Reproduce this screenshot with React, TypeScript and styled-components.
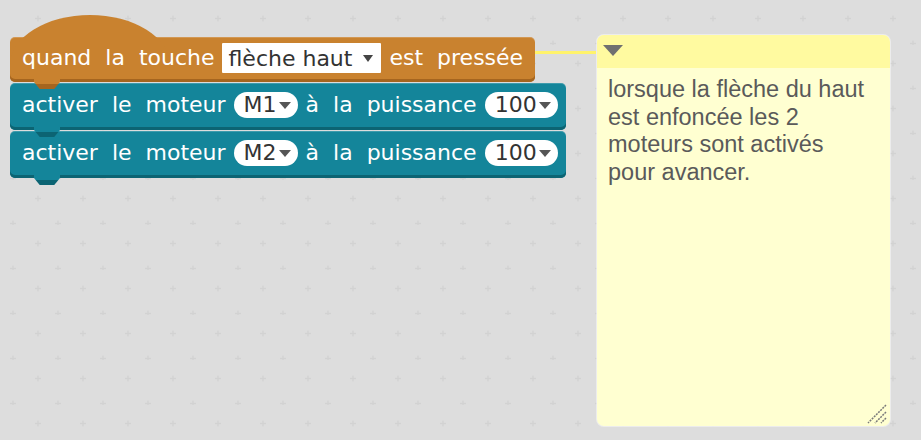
import React from "react";
import styled, { createGlobalStyle } from "styled-components";

const GlobalStyle = createGlobalStyle`
  html, body {
    margin: 0;
    padding: 0;
    background: #dddddd;
    overflow: hidden;
  }
`;

const ORANGE = "#c9822f";
const ORANGE_SHADE = "#a5651f";
const TEAL = "#14859a";
const TEAL_SHADE = "#0c6473";

const Workspace = styled.div`
  position: relative;
  display: flex;
  align-items: flex-start;
  width: 921px;
  height: 440px;
  padding: 0 31px 0 10px;
  box-sizing: border-box;
  background: #dddddd;
  overflow: hidden;
`;

const GridLayer = styled.svg`
  position: absolute;
  inset: 0;
  width: 100%;
  height: 100%;
  pointer-events: none;
`;

const Stack = styled.div`
  position: relative;
  z-index: 1;
  display: flex;
  flex-direction: column;
  align-items: flex-start;
  gap: 1px;
  margin-top: 37px;
`;

const Block = styled.div<{ $color: string; $shade: string; $layer: number; $hat?: boolean }>`
  position: relative;
  z-index: ${(p) => p.$layer};
  display: flex;
  align-items: center;
  gap: 8px;
  height: ${(p) => (p.$hat ? 45 : 47)}px;
  padding: 0 ${(p) => (p.$hat ? 12 : 8)}px 3px 12px;
  box-sizing: border-box;
  background: ${(p) => p.$color};
  border-radius: 5px;
  box-shadow: inset 0 -3px 0 ${(p) => p.$shade}, inset 0 1px 0 rgba(255, 255, 255, 0.18);

  &::before {
    content: "";
    display: ${(p) => (p.$hat ? "block" : "none")};
    position: absolute;
    z-index: -1;
    left: 0;
    top: -22px;
    width: 160px;
    height: 50px;
    border-radius: 50% 50% 0 0 / 100% 100% 0 0;
    background: ${(p) => p.$color};
  }

  &::after {
    content: "";
    position: absolute;
    left: 24px;
    top: calc(100% - 3px);
    width: 26px;
    height: 10px;
    background: linear-gradient(${(p) => p.$color} 0 55%, ${(p) => p.$shade} 55% 100%);
    clip-path: polygon(0 0, 100% 0, 100% 30%, 78% 100%, 22% 100%, 0 30%);
  }
`;

const Label = styled.span`
  color: #ffffff;
  font-family: "DejaVu Sans", sans-serif;
  font-size: 22px;
  word-spacing: 7px;
  white-space: pre;
  line-height: 1;
`;

const Caret = styled.span<{ $w: number; $h: number; $color: string }>`
  display: inline-block;
  width: 0;
  height: 0;
  border-left: ${(p) => p.$w / 2}px solid transparent;
  border-right: ${(p) => p.$w / 2}px solid transparent;
  border-top: ${(p) => p.$h}px solid ${(p) => p.$color};
`;

const Field = styled.span`
  display: flex;
  align-items: center;
  gap: 11px;
  height: 30px;
  padding: 0 8px 0 6px;
  background: #ffffff;
  border-radius: 1px;
  color: #333333;
  font-family: "DejaVu Sans", sans-serif;
  font-size: 22px;
  white-space: pre;
`;

const Pill = styled.span`
  display: flex;
  align-items: center;
  gap: 2px;
  height: 26px;
  padding: 0 7px 0 10px;
  background: #ffffff;
  border-radius: 13px;
  color: #333333;
  font-family: "DejaVu Sans", sans-serif;
  font-size: 22px;
  line-height: 1;
`;

const Connector = styled.span`
  position: absolute;
  left: 100%;
  top: 14px;
  width: 61px;
  height: 3px;
  background: #fff36b;
`;

const Comment = styled.div`
  position: relative;
  z-index: 1;
  display: flex;
  flex-direction: column;
  width: 293px;
  height: 391px;
  margin: 35px 0 0 auto;
  border-radius: 7px;
  overflow: hidden;
  box-shadow: 0 0 0 1px rgba(255, 255, 255, 0.45);
  background: #ffffd1;
`;

const CommentHeader = styled.div`
  display: flex;
  align-items: flex-start;
  height: 33px;
  padding: 10px 0 0 6px;
  box-sizing: border-box;
  background: #fffaa0;
`;

const CommentBody = styled.div`
  flex: 1;
  padding: 8px 10px 0 11px;
  color: #5a5a5a;
  font-family: "Liberation Sans", Arial, sans-serif;
  font-size: 23.5px;
  line-height: 27.5px;
  white-space: pre-wrap;
`;

const Grip = styled.svg`
  position: absolute;
  right: 2px;
  bottom: 1px;
`;

const COMMENT_TEXT = "lorsque la flèche du haut\nest enfoncée les 2\nmoteurs sont activés\npour avancer.";

const MotorBlock: React.FC<{ motor: string; power: string; layer: number }> = ({ motor, power, layer }) => (
  <Block $color={TEAL} $shade={TEAL_SHADE} $layer={layer}>
    <Label>activer le moteur</Label>
    <Pill>
      {motor}
      <Caret $w={12} $h={7} $color="#555" />
    </Pill>
    <Label>à la puissance</Label>
    <Pill>
      {power}
      <Caret $w={12} $h={7} $color="#555" />
    </Pill>
  </Block>
);

const App: React.FC = () => (
  <>
    <GlobalStyle />
    <Workspace>
      <GridLayer>
        <defs>
          <pattern id="dots" width="45" height="45" patternUnits="userSpaceOnUse">
            <path d="M35 18.5h6M38 15.5v6M10 43.5h6M13 40.5v6" stroke="#d2d2d2" strokeWidth="1.3" />
          </pattern>
        </defs>
        <rect width="100%" height="100%" fill="url(#dots)" />
      </GridLayer>

      <Stack>
        <Block $color={ORANGE} $shade={ORANGE_SHADE} $layer={3} $hat>
          <Label>quand la touche</Label>
          <Field>
            flèche haut
            <Caret $w={10} $h={7} $color="#444" />
          </Field>
          <Label>est pressée</Label>
          <Connector />
        </Block>
        <MotorBlock motor="M1" power="100" layer={2} />
        <MotorBlock motor="M2" power="100" layer={1} />
      </Stack>

      <Comment>
        <CommentHeader>
          <Caret $w={20} $h={11} $color="#707070" />
        </CommentHeader>
        <CommentBody>{COMMENT_TEXT}</CommentBody>
        <Grip width="22" height="22" viewBox="0 0 22 22">
          <path d="M20 2L2 20M20 9L9 20M20 15L15 20" stroke="#7a7a7a" strokeWidth="1.5" strokeDasharray="2 1" />
        </Grip>
      </Comment>
    </Workspace>
  </>
);

export default App;
